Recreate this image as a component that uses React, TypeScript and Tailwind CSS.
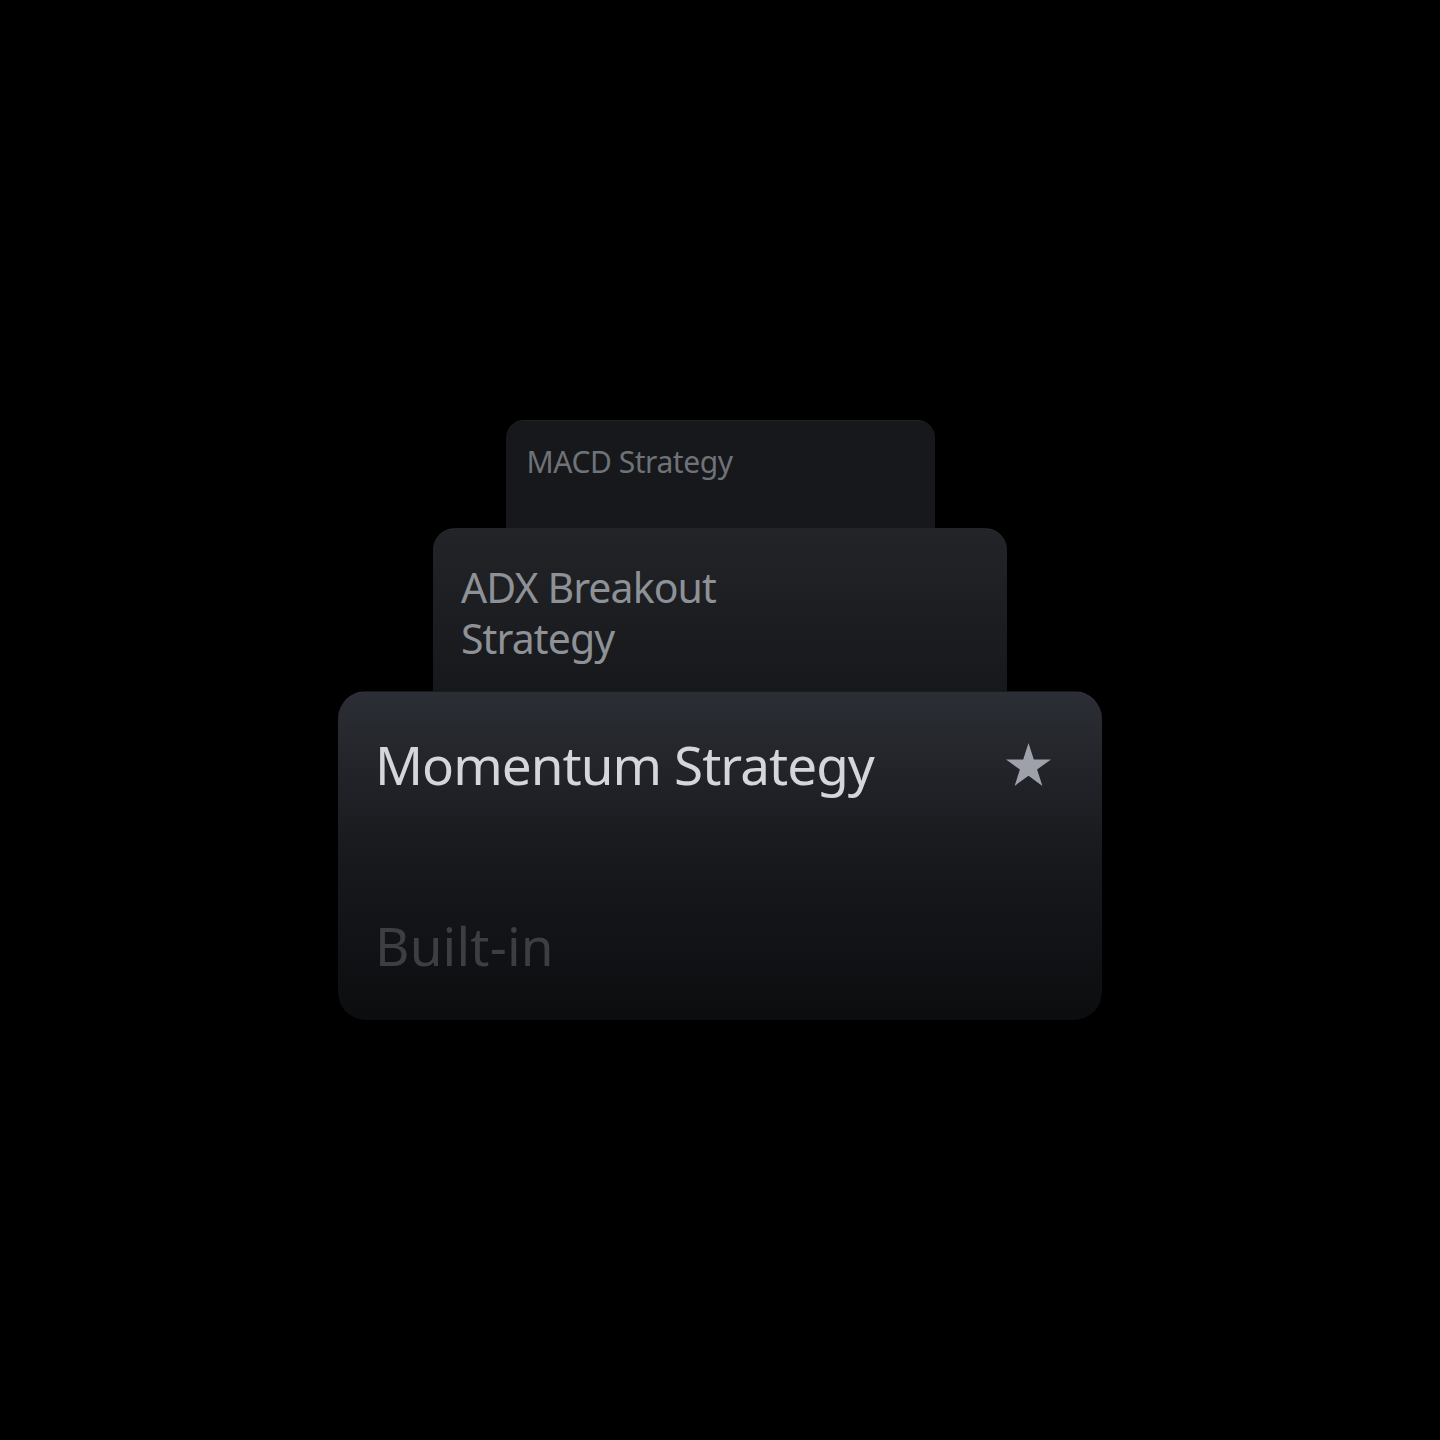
import React from 'react';

const font = { fontFamily: '"Noto Sans", "Open Sans", sans-serif' };

const Star: React.FC<{ className?: string }> = ({ className }) => (
  <svg viewBox="-0.951 -1 1.902 1.809" className={className} fill="currentColor">
    <path d="M0 -1L0.2245 -0.309L0.951 -0.309L0.363 0.118L0.588 0.809L0 0.382L-0.588 0.809L-0.363 0.118L-0.951 -0.309L-0.2245 -0.309Z" />
  </svg>
);

export default function App() {
  return (
    <div className="min-h-screen bg-black flex items-center justify-center" style={font}>
      <div className="flex flex-col items-center">
        {/* back card */}
        <div className="w-[429px] h-[108px] rounded-t-[18px] bg-[#17181b] border-t border-white/[0.04] pl-[21px] pt-[26px]">
          <div className="text-[30px] leading-none text-[#6f7277] tracking-[-0.45px]">MACD Strategy</div>
        </div>

        {/* middle card */}
        <div className="w-[574px] h-[163px] rounded-t-[22px] bg-gradient-to-b from-[#222428] to-[#17181b] border-t border-white/[0.05] pl-[28px] pt-[33px]">
          <div className="text-[41px] leading-[51px] text-[#8e9196] tracking-[-0.9px]">
            ADX Breakout
            <br />
            Strategy
          </div>
        </div>

        {/* front card */}
        <div className="w-[764px] h-[329px] rounded-[28px] bg-gradient-to-b from-[#2b2e34] via-[#18191d] to-[#0c0d0f] border-t border-white/[0.06] pl-[37px] pr-[51px] pt-[46px] pb-[48px] flex flex-col justify-between">
          <div className="flex items-start justify-between">
            <div className="text-[53px] leading-none text-[#d4d6da] tracking-[-0.95px]">Momentum Strategy</div>
            <Star className="w-[45px] h-[43px] mt-[5px] text-[#9ea1aa]" />
          </div>
          <div className="text-[53px] leading-none text-[#3c3e43] tracking-[0.2px]">Built-in</div>
        </div>
      </div>
    </div>
  );
}
